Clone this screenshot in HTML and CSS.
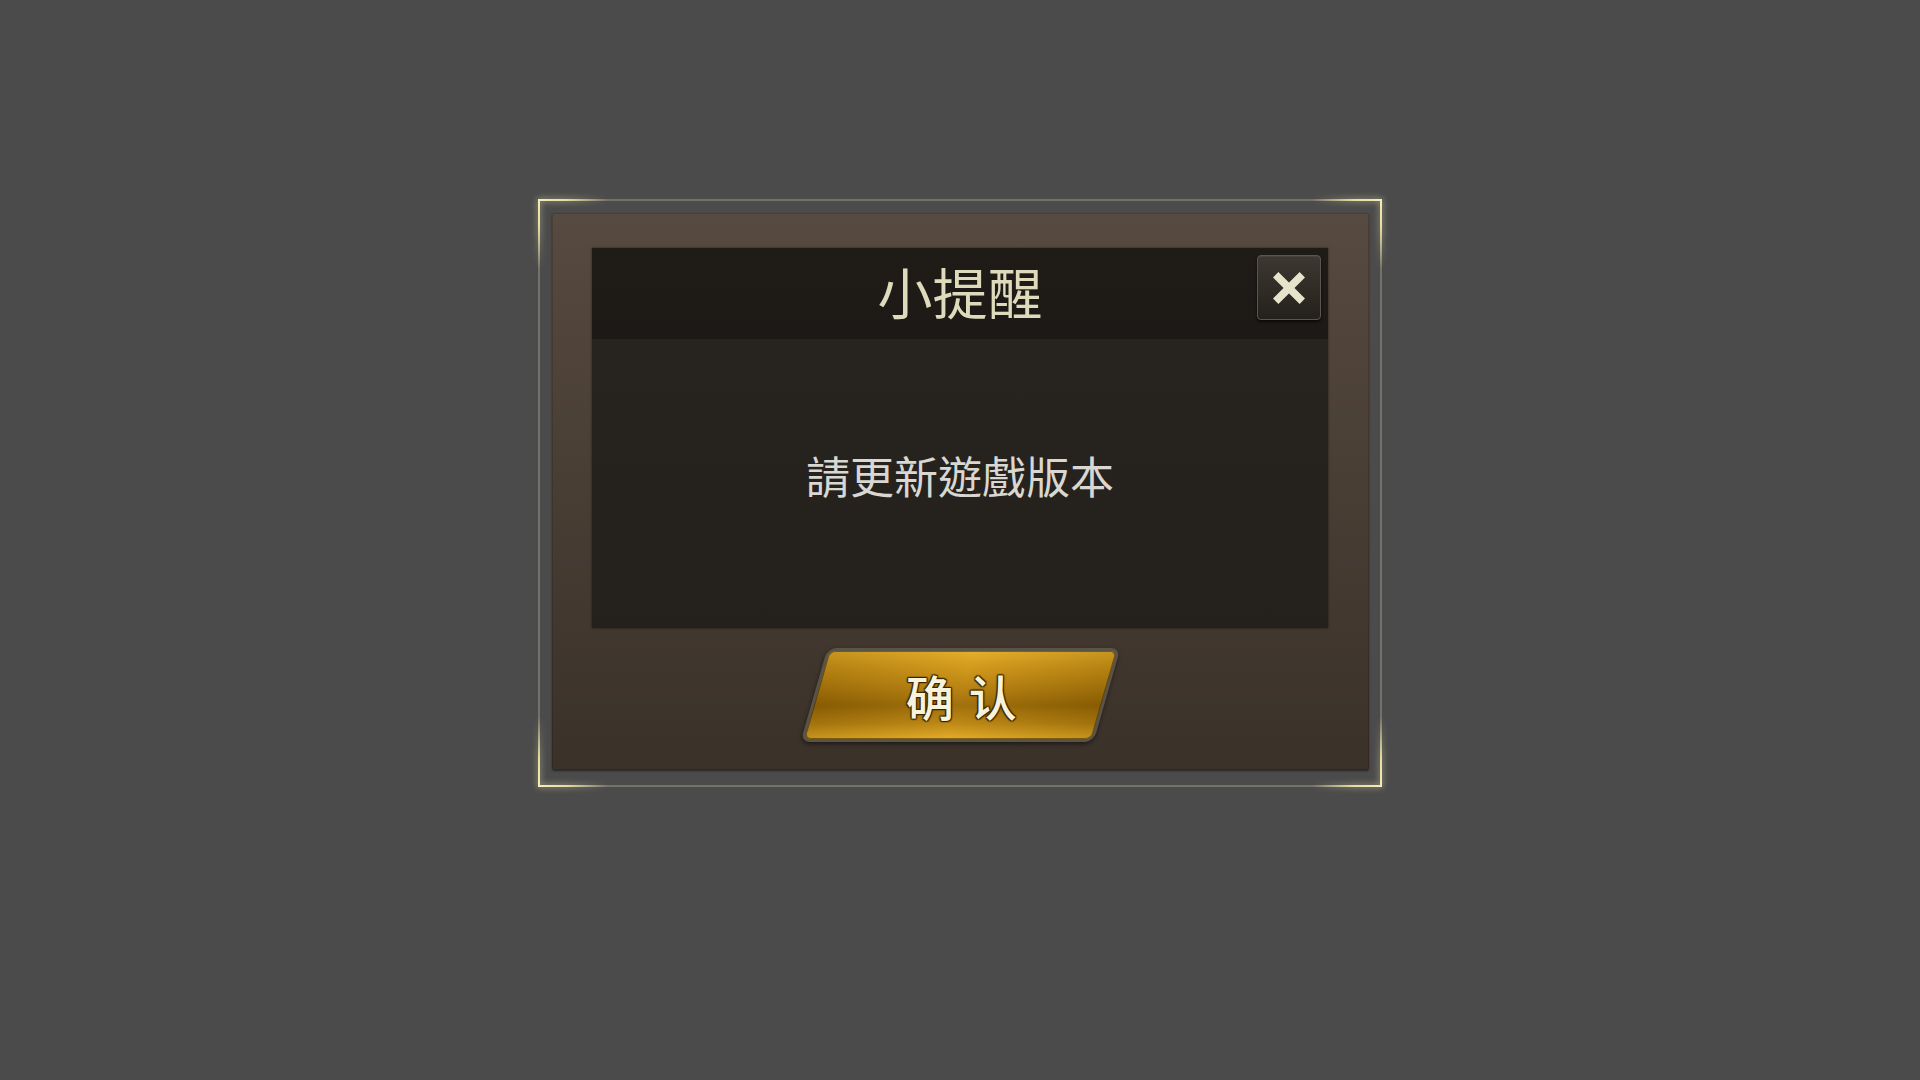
FILE: index.html
```html
<!DOCTYPE html>
<html lang="zh-Hant">
<head>
<meta charset="utf-8">
<title>小提醒</title>
<link rel="stylesheet" href="styles.css">
</head>
<body>
<div class="stage">
  <div class="frame">
    <span class="corner corner-tl"></span>
    <span class="corner corner-tr"></span>
    <span class="corner corner-bl"></span>
    <span class="corner corner-br"></span>
    <div class="panel">
      <div class="sheet">
        <div class="titlebar">
          <h1 class="title">小提醒</h1>
          <button class="close" aria-label="關閉">
            <svg viewBox="0 0 40 40" width="38" height="38">
              <path d="M6 6 L34 34 M34 6 L6 34" stroke="#e6e4ca" stroke-width="8" stroke-linecap="butt"/>
            </svg>
          </button>
        </div>
        <div class="message">請更新遊戲版本</div>
      </div>
      <div class="actions">
        <button class="confirm"><span class="confirm-label">确 认</span></button>
      </div>
    </div>
  </div>
</div>
</body>
</html>
```
FILE: styles.css
```css
html, body {
  margin: 0;
  padding: 0;
  background: #4b4b4b;
  width: 1920px;
  height: 1080px;
  overflow: hidden;
}

.stage {
  display: flex;
  justify-content: center;
  padding-top: 199px;
}

.frame {
  position: relative;
  box-sizing: border-box;
  width: 844px;
  height: 588px;
  border: 2px solid #74716a;
  padding: 12px 11px 15px 12px;
  display: flex;
}

.corner {
  position: absolute;
  width: 70px;
  height: 70px;
  background-repeat: no-repeat;
  filter: drop-shadow(0 0 3px rgba(240, 232, 170, 0.8));
}
.corner-tl {
  top: -2px; left: -2px;
  background-image:
    linear-gradient(to right, #f3ecbd 0%, #e6dca6 40%, rgba(200, 190, 150, 0) 100%),
    linear-gradient(to bottom, #f3ecbd 0%, #e6dca6 40%, rgba(200, 190, 150, 0) 100%);
  background-size: 100% 2px, 2px 100%;
  background-position: left top, left top;
}
.corner-tr {
  top: -2px; right: -2px;
  background-image:
    linear-gradient(to left, #f3ecbd 0%, #e6dca6 40%, rgba(200, 190, 150, 0) 100%),
    linear-gradient(to bottom, #f3ecbd 0%, #e6dca6 40%, rgba(200, 190, 150, 0) 100%);
  background-size: 100% 2px, 2px 100%;
  background-position: right top, right top;
}
.corner-bl {
  bottom: -2px; left: -2px;
  background-image:
    linear-gradient(to right, #f3ecbd 0%, #e6dca6 40%, rgba(200, 190, 150, 0) 100%),
    linear-gradient(to top, #f3ecbd 0%, #e6dca6 40%, rgba(200, 190, 150, 0) 100%);
  background-size: 100% 2px, 2px 100%;
  background-position: left bottom, left bottom;
}
.corner-br {
  bottom: -2px; right: -2px;
  background-image:
    linear-gradient(to left, #f3ecbd 0%, #e6dca6 40%, rgba(200, 190, 150, 0) 100%),
    linear-gradient(to top, #f3ecbd 0%, #e6dca6 40%, rgba(200, 190, 150, 0) 100%);
  background-size: 100% 2px, 2px 100%;
  background-position: right bottom, right bottom;
}

.panel {
  flex: 1;
  display: flex;
  flex-direction: column;
  padding: 35px 41px 0 40px;
  background: linear-gradient(to bottom, #574a40 0%, #4a3f35 45%, #3a3129 100%);
  box-shadow: 0 1px 2px rgba(0, 0, 0, 0.5), inset 0 0 0 1px rgba(0, 0, 0, 0.15);
  border-radius: 2px;
}

.sheet {
  height: 380px;
  display: flex;
  flex-direction: column;
  background: #25221e;
  box-shadow: 0 0 2px rgba(0, 0, 0, 0.6);
}

.titlebar {
  position: relative;
  height: 90px;
  display: flex;
  align-items: center;
  justify-content: center;
  background: linear-gradient(to bottom, #1f1c18 0%, #1c1916 100%);
  border-bottom: 1px solid #1a1714;
}

.title {
  margin: 0 0 6px 0;
  font-family: "Noto Sans CJK TC", "Noto Sans CJK SC", sans-serif;
  font-weight: 400;
  font-size: 55px;
  line-height: 1;
  color: #dedbbd;
  letter-spacing: 0;
}

.close {
  position: absolute;
  top: 7px;
  right: 7px;
  width: 64px;
  height: 65px;
  padding: 0;
  border: 1px solid #5c554b;
  border-radius: 4px;
  background: linear-gradient(to bottom, #3d3831 0%, #2f2b25 55%, #24201b 100%);
  box-shadow: 0 2px 3px rgba(0, 0, 0, 0.6), inset 0 1px 0 rgba(255, 255, 255, 0.06);
  display: flex;
  align-items: center;
  justify-content: center;
}

.message {
  flex: 1;
  display: flex;
  align-items: center;
  justify-content: center;
  padding-bottom: 18px;
  font-family: "Noto Sans CJK TC", "Noto Sans CJK SC", sans-serif;
  font-size: 44px;
  color: #d8d7d2;
  background: linear-gradient(to bottom, #27241f 0%, #24211d 100%);
}

.actions {
  display: flex;
  justify-content: center;
  padding-top: 20px;
}

.confirm {
  width: 293px;
  height: 94px;
  padding: 0;
  transform: skewX(-16deg);
  border: 3px solid #5a5446;
  border-radius: 9px;
  background:
    linear-gradient(to right, rgba(0, 0, 0, 0.12) 0%, rgba(255, 220, 120, 0.08) 50%, rgba(0, 0, 0, 0.12) 100%),
    linear-gradient(to bottom, #e3ab24 0%, #cf9516 18%, #b07a0a 45%, #9a6804 62%, #b8820e 82%, #e2a923 100%);
  box-shadow: 0 2px 4px rgba(0, 0, 0, 0.5), inset 0 0 0 1px rgba(40, 26, 0, 0.5);
  display: flex;
  align-items: center;
  justify-content: center;
}

.confirm-label {
  transform: skewX(16deg);
  font-family: "Noto Sans CJK SC", "Noto Sans CJK TC", sans-serif;
  font-size: 48px;
  font-weight: 500;
  line-height: 1;
  color: #f6f2dc;
  letter-spacing: 2px;
  padding-left: 4px;
  text-shadow:
    0 0 2px #3a2500,
    1px 1px 1px #3a2500,
    -1px -1px 1px #3a2500,
    1px -1px 1px #3a2500,
    -1px 1px 1px #3a2500;
}
```
